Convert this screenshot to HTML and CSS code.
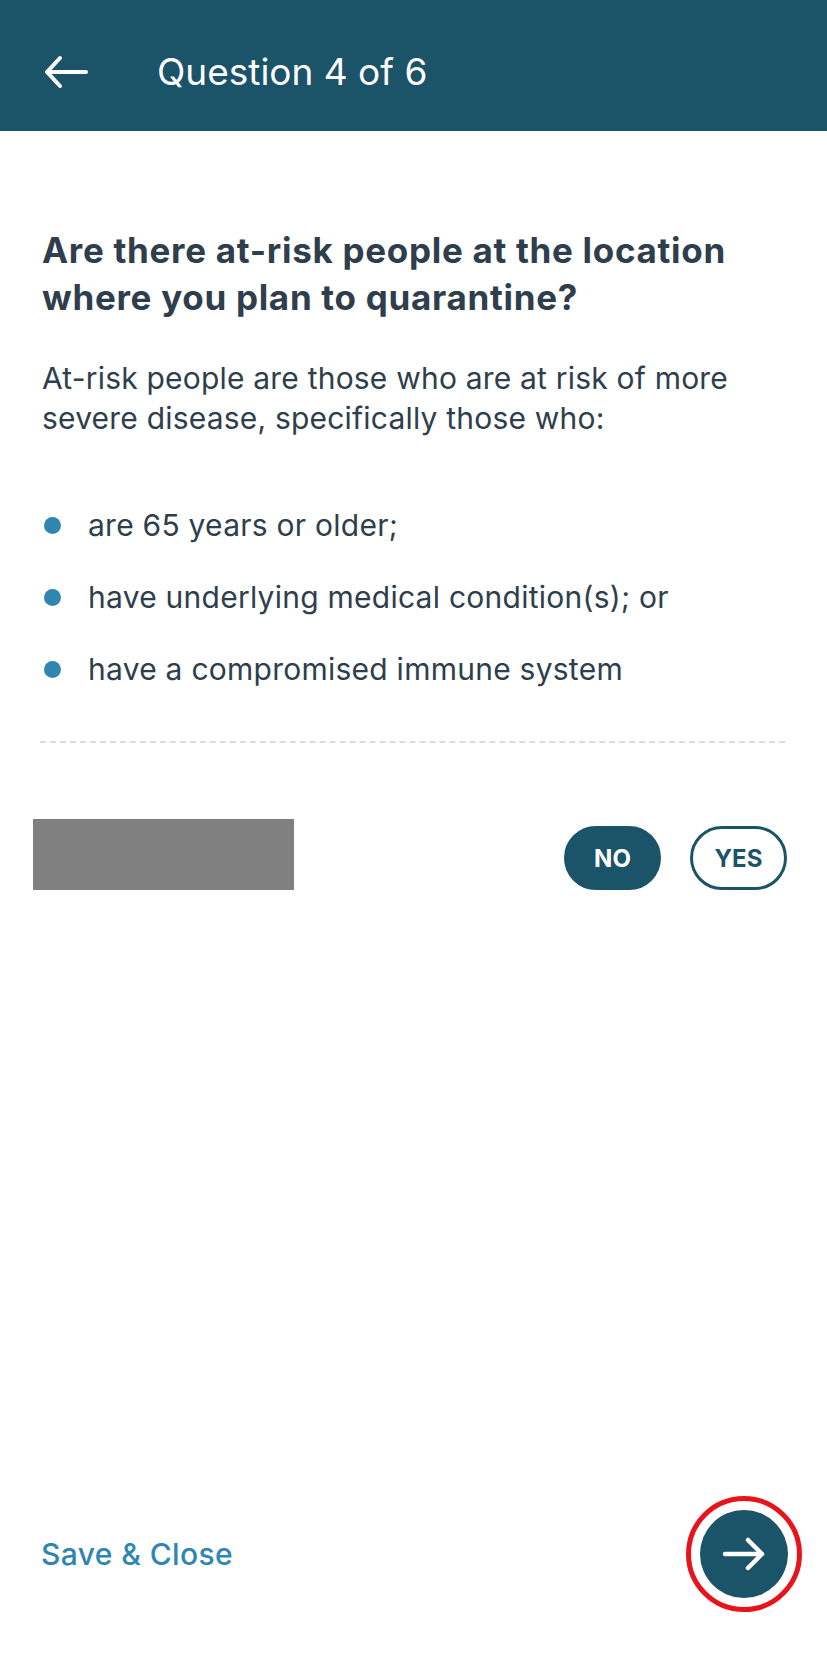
FILE: index.html
```html
<!DOCTYPE html>
<html lang="en">
<head>
<meta charset="utf-8">
<title>Question 4 of 6</title>
<link rel="stylesheet" href="styles.css">
</head>
<body>
<div class="screen">
  <header class="topbar">
    <button class="back" aria-label="Back">
      <svg width="46" height="34" viewBox="0 0 46 34"><path d="M43 17H4M17 3L4 17L17 31" fill="none" stroke="#fff" stroke-width="4" stroke-linecap="round" stroke-linejoin="round"/></svg>
    </button>
    <h1 class="title">Question 4 of 6</h1>
  </header>

  <main class="content">
    <h2 class="question">Are there at-risk people at the location where you plan to quarantine?</h2>
    <p class="intro">At-risk people are those who are at risk of more severe disease, specifically those who:</p>
    <ul class="list">
      <li>are 65 years or older;</li>
      <li>have underlying medical condition(s); or</li>
      <li>have a compromised immune system</li>
    </ul>
    <hr class="divider">
    <div class="answer-row">
      <div class="redacted"></div>
      <div class="choices">
        <button class="choice selected">NO</button>
        <button class="choice">YES</button>
      </div>
    </div>
  </main>

  <footer class="footer">
    <a class="save" href="#">Save &amp; Close</a>
    <button class="next" aria-label="Next">
      <svg width="44" height="36" viewBox="0 0 44 36"><path d="M3 18H40M26 4L40 18L26 32" fill="none" stroke="#fff" stroke-width="4.5" stroke-linecap="round" stroke-linejoin="round"/></svg>
    </button>
  </footer>
</div>
</body>
</html>
```

FILE: styles.css
```css
* { box-sizing: border-box; }
html, body { margin: 0; padding: 0; background: #fff; }
body {
  font-family: Inter, "Noto Sans", "Liberation Sans", sans-serif;
  color: #2f3e4c;
}
.screen {
  width: 827px;
  min-height: 1654px;
  display: flex;
  flex-direction: column;
}
.topbar {
  height: 131px;
  background: #1b5368;
  display: flex;
  align-items: center;
  padding: 12px 0 0 43px;
}
.back {
  background: none;
  border: 0;
  padding: 0;
  width: 46px;
  height: 34px;
  display: flex;
  margin-right: 68px;
}
.title {
  margin: 0;
  color: #fff;
  font-weight: 400;
  font-size: 37px;
  letter-spacing: 0;
}
.content {
  padding: 0 40px 0 42px;
  flex: 1;
}
.question {
  margin: 96px 0 0;
  font-size: 35px;
  line-height: 47px;
  font-weight: 700;
  letter-spacing: 0.7px;
}
.intro {
  margin: 37px 0 0;
  font-size: 30px;
  line-height: 40px;
  font-weight: 400;
  letter-spacing: 0.2px;
}
.list {
  list-style: none;
  margin: 51px 0 0;
  padding: 0;
}
.list li {
  display: flex;
  align-items: center;
  font-size: 30px;
  line-height: 40px;
  height: 72px;
  letter-spacing: 0.25px;
}
.list li::before {
  content: "";
  width: 17px;
  height: 17px;
  border-radius: 50%;
  background: #2e86b1;
  margin: 0 27px 0 2px;
  flex: none;
}
.divider {
  margin: 36px 0 0 -2px;
  border: 0;
  border-top: 2px dashed #dcdcdc;
  width: 745px;
}
.answer-row {
  margin: 76px 0 0 -9px;
  display: flex;
  align-items: flex-start;
  justify-content: space-between;
}
.redacted {
  width: 261px;
  height: 71px;
  background: #808080;
}
.choices {
  display: flex;
  gap: 29px;
  margin-top: 7px;
}
.choice {
  width: 97px;
  height: 64px;
  border-radius: 32px;
  border: 3px solid #1b5368;
  background: #fff;
  color: #1b5368;
  font-family: Inter, "Noto Sans", sans-serif;
  font-size: 24px;
  font-weight: 700;
  padding: 0;
}
.choice.selected {
  background: #1b5368;
  color: #fff;
}
.footer {
  display: flex;
  align-items: center;
  justify-content: space-between;
  padding: 0 39px 56px 41px;
}
.save {
  color: #2e86b1;
  text-decoration: none;
  font-size: 30px;
  font-weight: 500;
  letter-spacing: 0.4px;
}
.next {
  width: 88px;
  height: 88px;
  border-radius: 50%;
  border: 0;
  background: #1b5368;
  display: flex;
  align-items: center;
  justify-content: center;
  padding: 0;
  outline: 5px solid #e8141c;
  outline-offset: 9px;
}
```
